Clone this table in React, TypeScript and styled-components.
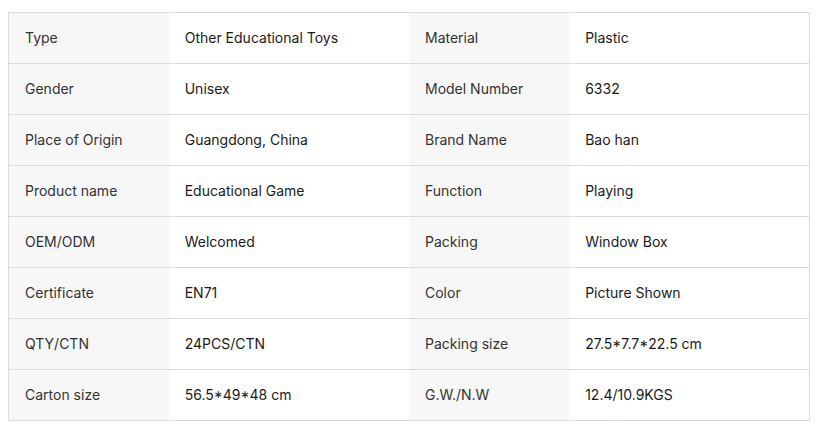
import React from 'react';
import styled, { createGlobalStyle } from 'styled-components';

const GlobalStyle = createGlobalStyle`
    body {
        margin: 0;
        padding: 12px 8px;
        background: #fff;
        font-family: Inter, "Noto Sans", sans-serif;
    }
`

const Table = styled.table`
    width: 802px;
    border-collapse: collapse;
    border: 1px solid #dcdcdc;
    table-layout: fixed;
    font-size: 14px;
`

const Row = styled.tr`
    height: 51px;
    border-bottom: 1px solid #dcdcdc;
`

const Cell = styled.td<{ $label?: boolean }>`
    padding: 0 16px 1px;
    width: ${p => (p.$label ? '160px' : '240px')};
    background: ${p => (p.$label ? '#f7f7f7' : '#fff')};
    color: ${p => (p.$label ? '#333' : '#1a1a1a')};
    vertical-align: middle;
    box-sizing: border-box;
`

const rows = [
    ['Type', 'Other Educational Toys', 'Material', 'Plastic'],
    ['Gender', 'Unisex', 'Model Number', '6332'],
    ['Place of Origin', 'Guangdong, China', 'Brand Name', 'Bao han'],
    ['Product name', 'Educational Game', 'Function', 'Playing'],
    ['OEM/ODM', 'Welcomed', 'Packing', 'Window Box'],
    ['Certificate', 'EN71', 'Color', 'Picture Shown'],
    ['QTY/CTN', '24PCS/CTN', 'Packing size', '27.5*7.7*22.5 cm'],
    ['Carton size', '56.5*49*48 cm', 'G.W./N.W', '12.4/10.9KGS'],
]

function App() {
    return (
        <>
            <GlobalStyle />
            <Table>
                <tbody>
                    {rows.map(r => (
                        <Row key={r[0]}>
                            <Cell $label>{r[0]}</Cell>
                            <Cell>{r[1]}</Cell>
                            <Cell $label>{r[2]}</Cell>
                            <Cell>{r[3]}</Cell>
                        </Row>
                    ))}
                </tbody>
            </Table>
        </>
    )
}

export default App;
